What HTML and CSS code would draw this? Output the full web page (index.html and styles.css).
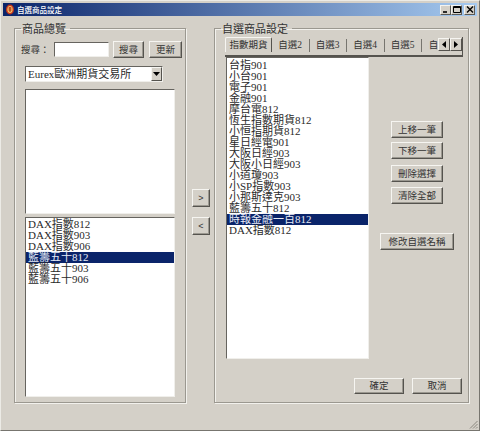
FILE: index.html
```html
<!DOCTYPE html>
<html lang="zh-Hant">
<head>
<meta charset="utf-8">
<title>自選商品設定</title>
<link rel="stylesheet" href="styles.css">
</head>
<body>
<div class="window">
  <div class="titlebar">
    <svg class="app-icon" width="8" height="11" viewBox="0 0 8 11"><ellipse cx="4" cy="5.5" rx="4" ry="5" fill="#c8361c"/><ellipse cx="4" cy="5.5" rx="2.6" ry="3.4" fill="#f2c46a"/><path d="M2.5 4h3M2.5 6h3M4 3v5" stroke="#b02810" stroke-width="1" fill="none"/></svg>
    <span class="title-text">自選商品設定</span>
    <div class="caption-buttons">
      <span class="caption-btn"><svg width="10" height="9" viewBox="0 0 10 9"><path d="M2 7h4" stroke="#000" stroke-width="1.6"/></svg></span>
      <span class="caption-btn"><svg width="10" height="9" viewBox="0 0 10 9"><path d="M1.5 1.5h7v6h-7z M1.5 2.5h7" stroke="#000" fill="none"/></svg></span>
      <span class="caption-btn close"><svg width="10" height="9" viewBox="0 0 10 9"><path d="M2 1.5l6 6M8 1.5l-6 6" stroke="#000" stroke-width="1.4"/></svg></span>
    </div>
  </div>
  <div class="content">
    <fieldset class="group group-left">
      <legend>商品總覽</legend>
      <div class="search-row">
        <span class="search-label">搜尋：</span>
        <span class="input"></span>
        <button class="btn btn-search">搜尋</button>
        <button class="btn btn-refresh">更新</button>
      </div>
      <div class="combo">
        <span class="combo-text">Eurex歐洲期貨交易所</span>
        <span class="combo-arrow"><svg width="7" height="4" viewBox="0 0 7 4"><path d="M0 0h7L3.5 4z" fill="#000"/></svg></span>
      </div>
      <div class="list list-top"></div>
      <ul class="list list-bottom">
        <li>DAX指數812</li>
        <li>DAX指數903</li>
        <li>DAX指數906</li>
        <li class="selected">藍籌五十812</li>
        <li>藍籌五十903</li>
        <li>藍籌五十906</li>
      </ul>
    </fieldset>
    <div class="transfer">
      <button class="btn btn-transfer">&gt;</button>
      <button class="btn btn-transfer">&lt;</button>
    </div>
    <fieldset class="group group-right">
      <legend>自選商品設定</legend>
      <div class="tabs">
        <span class="tab active">指數期貨</span>
        <span class="tab">自選2</span>
        <span class="tab">自選3</span>
        <span class="tab">自選4</span>
        <span class="tab">自選5</span>
        <span class="tab last">自選6</span>
        <div class="tab-scroll">
          <span class="scroll-btn"><svg width="4" height="7" viewBox="0 0 4 7"><path d="M4 0v7L0 3.5z" fill="#000"/></svg></span>
          <span class="scroll-btn"><svg width="4" height="7" viewBox="0 0 4 7"><path d="M0 0v7L4 3.5z" fill="#000"/></svg></span>
        </div>
      </div>
      <div class="editor">
        <ul class="list list-right">
          <li>台指901</li>
          <li>小台901</li>
          <li>電子901</li>
          <li>金融901</li>
          <li>摩台電812</li>
          <li>恆生指數期貨812</li>
          <li>小恒指期貨812</li>
          <li>星日經電901</li>
          <li>大阪日經903</li>
          <li>大阪小日經903</li>
          <li>小道瓊903</li>
          <li>小SP指數903</li>
          <li>小那斯達克903</li>
          <li>藍籌五十812</li>
          <li class="selected">時報金融一百812</li>
          <li>DAX指數812</li>
        </ul>
        <div class="side">
          <button class="btn btn-side">上移一筆</button>
          <button class="btn btn-side gap-a">下移一筆</button>
          <button class="btn btn-side gap-b">刪除選擇</button>
          <button class="btn btn-side gap-c">清除全部</button>
          <button class="btn btn-rename">修改自選名稱</button>
        </div>
      </div>
      <div class="footer">
        <button class="btn btn-footer">確定</button>
        <button class="btn btn-footer">取消</button>
      </div>
    </fieldset>
  </div>
  <svg class="grip" width="9" height="9" viewBox="0 0 9 9"><path d="M8.5 1L1 8.5M8.5 4L4 8.5M8.5 7L7 8.5" stroke="#8a877f" stroke-width="1" fill="none"/></svg>
</div>
</body>
</html>
```
FILE: styles.css
```css
* { box-sizing: border-box; }
html, body { margin: 0; padding: 0; }
body {
  width: 480px;
  height: 431px;
  overflow: hidden;
  background: #d4d0c8;
  font-family: "Liberation Serif", "Noto Sans CJK TC", serif;
  color: #2a2a2a;
}
.window {
  position: relative;
  width: 480px;
  height: 431px;
  padding: 3px 3px 0;
  background: #d4d0c8;
  border-top: 1px solid #ecebe6;
  border-left: 1px solid #ecebe6;
  border-right: 1px solid #77756f;
  border-bottom: 1px solid #77756f;
}
.titlebar {
  display: flex;
  align-items: center;
  height: 13px;
  margin: -1px -1px 0 -1px;
  padding: 0 2px 0 3px;
  background: linear-gradient(90deg, #0a246a 0%, #a6caf0 100%);
}
.app-icon { flex: none; }
.title-text {
  margin-left: 3px;
  font: 7.5px/13px "Noto Sans CJK TC", sans-serif;
  font-weight: 500;
  color: #fff;
}
.caption-buttons { display: flex; margin-left: auto; margin-right: 0; }
.caption-btn {
  display: flex;
  align-items: center;
  justify-content: center;
  width: 11px;
  height: 10px;
  background: #d4d0c8;
  border: 1px solid;
  border-color: #f4f3ef #5c5a55 #5c5a55 #f4f3ef;
}
.caption-btn svg { flex: none; }
.caption-btn.close { margin-left: 2px; }

.content {
  display: flex;
  padding: 5px 0 0 10px;
}
.group {
  margin: 0;
  padding: 0;
  height: 382px;
  border: 1px solid #9b9890;
  box-shadow: 1px 1px 0 #f2f1ed, inset 1px 1px 0 #f2f1ed;
  min-width: 0;
}
.group legend {
  margin-left: 6px;
  padding: 0 4px 0 1px;
  font: 11px/14px "Noto Sans CJK TC", sans-serif;
  font-weight: 400;
  color: #333;
}
.group-left { width: 172px; flex: none; }
.group-right { width: 255px; flex: none; }

.btn {
  padding: 0;
  font: 9.5px/1 "Noto Sans CJK TC", sans-serif;
  color: #333;
  background: #d4d0c8;
  border: 1px solid;
  border-color: #f6f5f1 #55534e #55534e #f6f5f1;
  box-shadow: inset -1px -1px 0 #9b9890;
}

.search-row {
  display: flex;
  align-items: center;
  margin-top: 6px;
  padding-left: 6px;
}
.search-label {
  width: 33px;
  font: 9.5px/1 "Noto Sans CJK TC", sans-serif;
  color: #333;
}
.input {
  width: 55px;
  height: 15px;
  background: #fff;
  border: 1px solid;
  border-color: #66645f #f0efeb #f0efeb #66645f;
}
.btn-search { width: 31px; height: 17px; margin-left: 4px; }
.btn-refresh { width: 33px; height: 17px; margin-left: 5px; }

.combo {
  display: flex;
  align-items: center;
  width: 138px;
  height: 16px;
  margin: 8px 0 0 10px;
  background: #fff;
  border: 1px solid;
  border-color: #66645f #f0efeb #f0efeb #66645f;
}
.combo-text {
  padding-left: 2px;
  font-size: 11px;
  line-height: 14px;
  white-space: nowrap;
}
.combo-arrow {
  display: flex;
  align-items: center;
  justify-content: center;
  width: 11px;
  height: 14px;
  margin-left: auto;
  background: #d4d0c8;
  border: 1px solid;
  border-color: #f6f5f1 #55534e #55534e #f6f5f1;
}

.list {
  margin: 0;
  padding: 0;
  list-style: none;
  background: #fff;
  border: 1px solid;
  border-color: #66645f #f0efeb #f0efeb #66645f;
  overflow: hidden;
}
.list li {
  height: 11px;
  padding-left: 2px;
  font-size: 11px;
  line-height: 11px;
  white-space: nowrap;
}
.list li.selected {
  background: #0a246a;
  color: #e8ecf6;
}
.list-top {
  width: 150px;
  height: 125px;
  margin: 7px 0 0 10px;
}
.list-bottom {
  width: 150px;
  height: 180px;
  margin: 3px 0 0 10px;
  padding-top: 1px;
}

.transfer {
  display: flex;
  flex: none;
  flex-direction: column;
  width: 28px;
  padding: 168px 0 0 6px;
}
.btn-transfer {
  width: 18px;
  height: 18px;
  font: 9px/1 "Liberation Sans", sans-serif;
}
.btn-transfer + .btn-transfer { margin-top: 10px; }

.tabs {
  position: relative;
  display: flex;
  align-items: flex-end;
  width: 238px;
  height: 20px;
  margin: 2px 0 0 10px;
  overflow: hidden;
  border-bottom: 2px solid #55534e;
  border-right: 1px solid #55534e;
  box-shadow: inset 0 -3px 0 #d4d0c8;
}
.tab {
  flex: none;
  width: 37.5px;
  height: 13px;
  margin-bottom: 3px;
  border-right: 1px solid #77756f;
  font-size: 9.5px;
  line-height: 13px;
  text-align: center;
  font-family: "Liberation Serif", "Noto Sans CJK TC", serif;
  color: #333;
}
.tab.active {
  width: 47px;
  height: 15px;
  border-top: 1px solid #f6f5f1;
  border-left: 1px solid #f6f5f1;
  border-right: 1px solid #55534e;
  border-radius: 2px 2px 0 0;
  font-family: "Noto Sans CJK TC", sans-serif;
  line-height: 13px;
}
.tab.last { border-right: 0; }
.tab-scroll {
  position: absolute;
  top: 1px;
  right: 0;
  display: flex;
}
.scroll-btn {
  display: flex;
  align-items: center;
  justify-content: center;
  width: 12px;
  height: 13px;
  background: #d4d0c8;
  border: 1px solid;
  border-color: #f6f5f1 #55534e #55534e #f6f5f1;
}

.editor { display: flex; }
.list-right {
  flex: none;
  width: 143px;
  height: 302px;
  margin-left: 11px;
  padding-top: 2px;
}
.side {
  display: flex;
  flex: none;
  flex-direction: column;
  align-items: center;
  width: 96px;
  padding-top: 64px;
}
.btn-side { width: 52px; height: 17px; }
.btn-side.gap-a { margin-top: 4px; }
.btn-side.gap-b { margin-top: 6px; }
.btn-side.gap-c { margin-top: 5px; }
.btn-rename { width: 74px; height: 17px; margin-top: 29px; }

.footer {
  display: flex;
  justify-content: flex-end;
  gap: 8px;
  margin-top: 19px;
  padding-right: 6px;
}
.btn-footer { width: 50px; height: 16px; }

.grip { position: absolute; right: 1px; bottom: 1px; }
```
